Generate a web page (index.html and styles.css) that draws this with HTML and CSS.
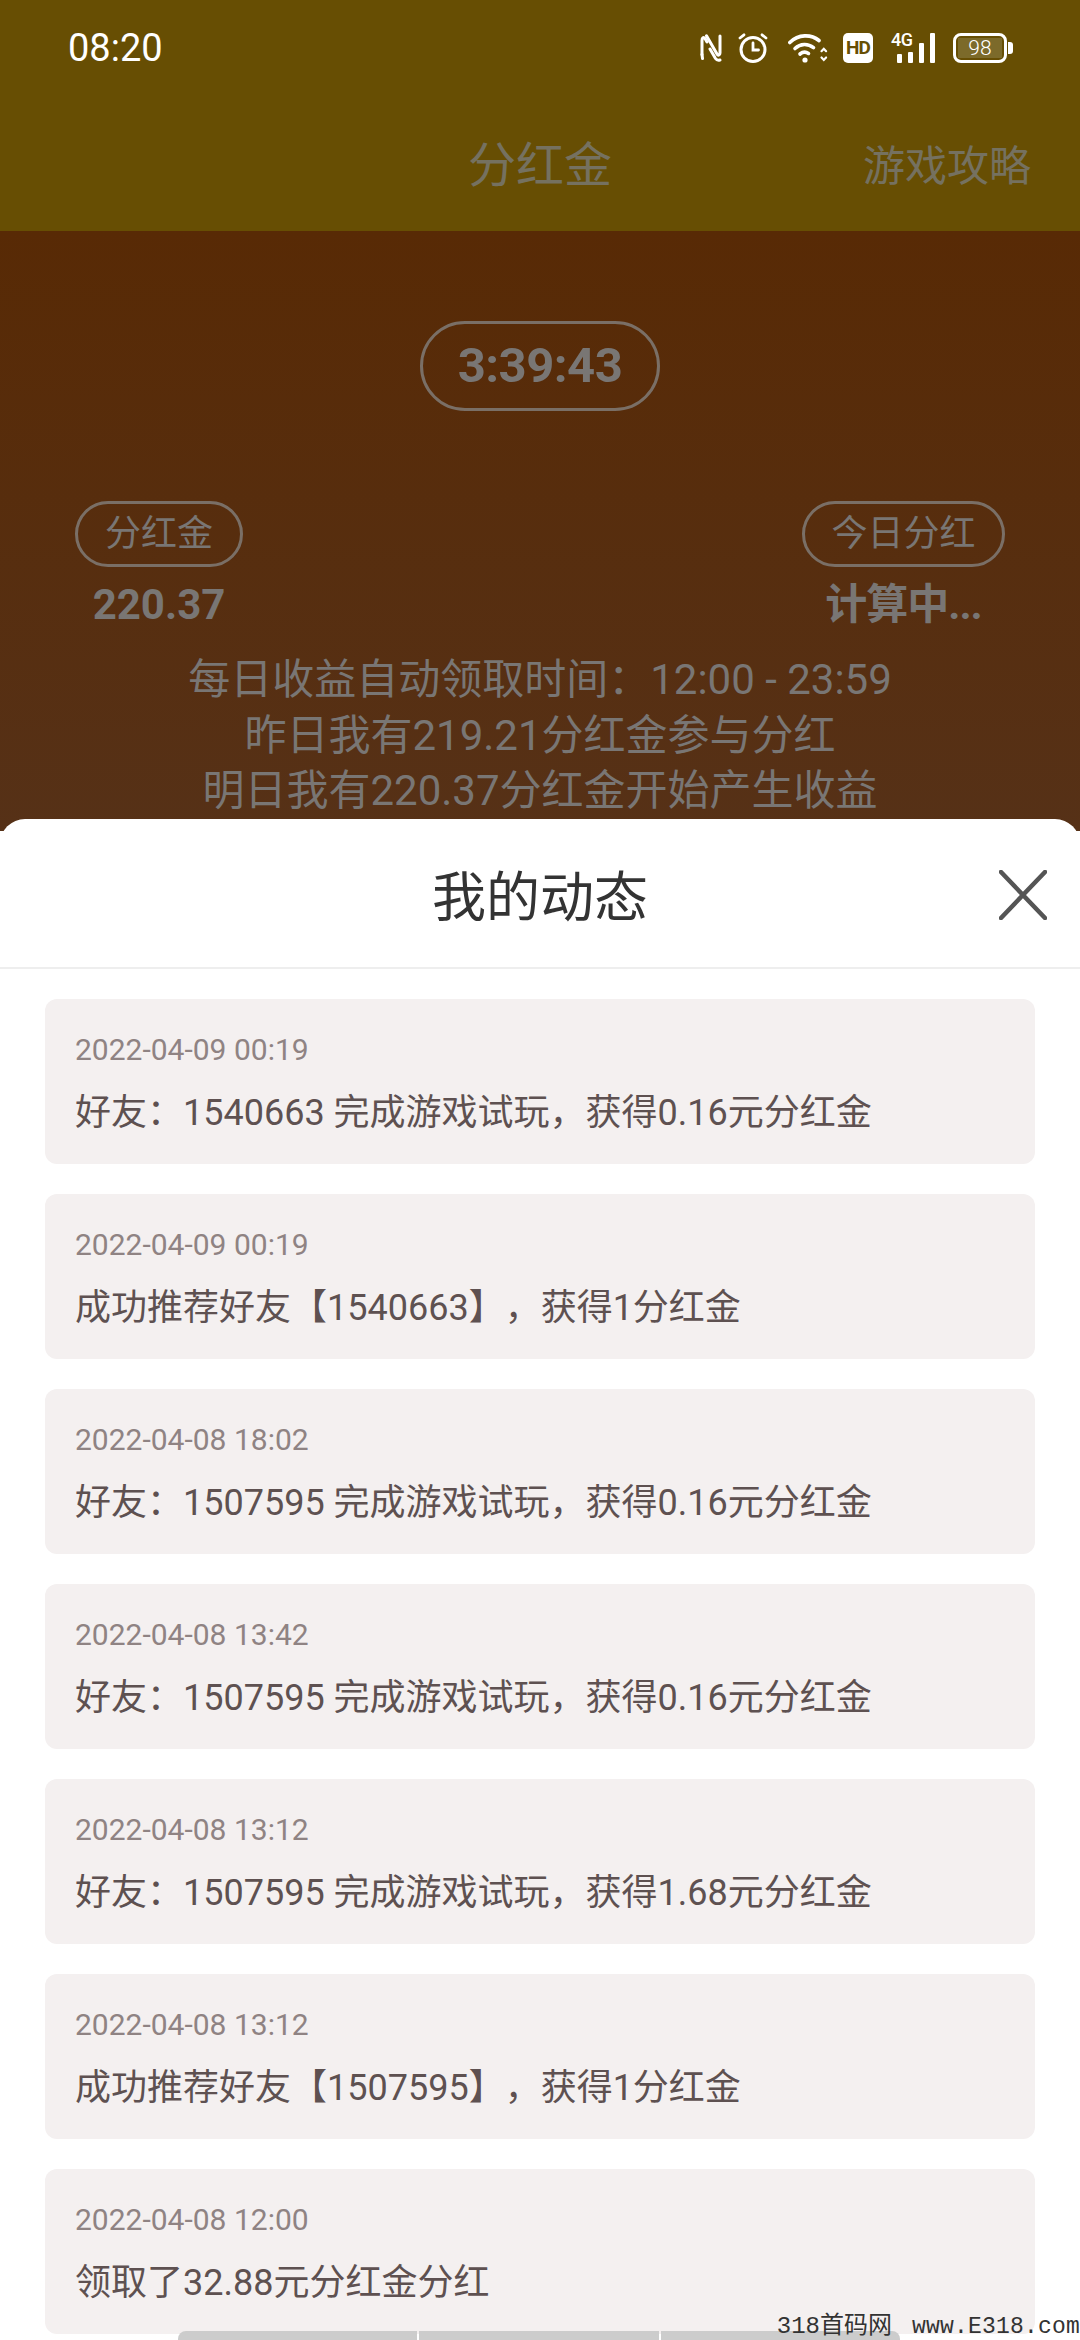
FILE: index.html
```html
<!DOCTYPE html>
<html lang="zh-CN">
<head>
<meta charset="utf-8">
<title>分红金</title>
<link rel="stylesheet" href="styles.css">
</head>
<body>
<div class="page">
  <header class="topbar">
    <div class="status">
      <span class="clock">08:20</span>
      <div class="status-icons">
        <svg class="ic-nfc" viewBox="0 0 22 28" fill="none" stroke="#fff" stroke-width="3" stroke-linecap="round" stroke-linejoin="round"><path d="M2 20.500V6.500C2 3.500 3.500 2.500 5 4.500L7 8"/><path d="M6.500 1.800 17 20c1 1.800 3 1.500 3-1V2"/><path d="M2.500 24.500 2 20.500M10 15l5.500 9.500c1 1.500 2.500 2 4.500 1.500"/></svg>
        <svg class="ic-alarm" viewBox="0 0 30 30" fill="none" stroke="#fff" stroke-linecap="round"><circle cx="15" cy="16.500" r="12" stroke-width="3"/><path d="M15 10v7h5.500" stroke-width="2.800"/><path d="M2 5 6 1.800M28 5 24 1.800" stroke-width="2.800"/></svg>
        <svg class="ic-wifi" viewBox="0 0 40 30" fill="none" stroke="#fff" stroke-width="3.600" stroke-linecap="round"><path d="M1.800 9.500C10.500 1 23 1 31 7.500"/><path d="M7 15.500c5.500-5.200 13-5.200 18.500-.8"/><path d="M12 21c2.800-2.300 6-2.300 8.500-.6"/><circle cx="17" cy="27" r="2.600" fill="#fff" stroke="none"/><path d="M33.500 18.200l2.300-2.400 2.300 2.400M33.500 24.500l2.300 2.400 2.300-2.400" stroke-width="2.200"/></svg>
        <span class="hd">HD</span>
        <div class="cell">
          <span class="cell-tag">4G</span>
          <span class="bar bar-1"></span>
          <span class="bar bar-2"></span>
          <span class="bar bar-3"></span>
          <span class="bar bar-4"></span>
        </div>
        <div class="battery"><span class="battery-body">98</span><span class="battery-cap"></span></div>
      </div>
    </div>
    <div class="navbar">
      <h1 class="nav-title">分红金</h1>
      <span class="nav-link">游戏攻略</span>
    </div>
  </header>

  <main class="hero">
    <div class="timer">3:39:43</div>
    <div class="stats">
      <div class="stat stat-left">
        <span class="tag">分红金</span>
        <strong class="stat-value">220.37</strong>
      </div>
      <div class="stat stat-right">
        <span class="tag">今日分红</span>
        <strong class="stat-value stat-pending">计算中...</strong>
      </div>
    </div>
    <div class="notes">
      <p>每日收益自动领取时间：12:00 - 23:59</p>
      <p>昨日我有219.21分红金参与分红</p>
      <p>明日我有220.37分红金开始产生收益</p>
    </div>
  </main>

  <section class="sheet">
    <div class="sheet-head">
      <h2 class="sheet-title">我的动态</h2>
      <svg class="sheet-close" viewBox="0 0 48 50" fill="none" stroke="#555" stroke-width="4.500" stroke-linecap="round"><path d="M2 2 46 48M46 2 2 48"/></svg>
    </div>
    <div class="feed">
      <article class="card"><time>2022-04-09 00:19</time><p>好友：1540663 完成游戏试玩，获得0.16元分红金</p></article>
      <article class="card"><time>2022-04-09 00:19</time><p>成功推荐好友【1540663】，获得1分红金</p></article>
      <article class="card"><time>2022-04-08 18:02</time><p>好友：1507595 完成游戏试玩，获得0.16元分红金</p></article>
      <article class="card"><time>2022-04-08 13:42</time><p>好友：1507595 完成游戏试玩，获得0.16元分红金</p></article>
      <article class="card"><time>2022-04-08 13:12</time><p>好友：1507595 完成游戏试玩，获得1.68元分红金</p></article>
      <article class="card"><time>2022-04-08 13:12</time><p>成功推荐好友【1507595】，获得1分红金</p></article>
      <article class="card"><time>2022-04-08 12:00</time><p>领取了32.88元分红金分红</p></article>
    </div>
  </section>

  <div class="tabs"><span></span><span></span><span></span></div>
  <div class="mark"><span class="mark-cn">318首码网</span><span class="mark-url">www.E318.com</span></div>
</div>
</body>
</html>
```
FILE: styles.css
```css
* { box-sizing: border-box; margin: 0; padding: 0; }

html, body { width: 1080px; height: 2340px; overflow: hidden; }

body {
  font-family: Roboto, "Noto Sans CJK SC", sans-serif;
  background: #fff;
  text-spacing-trim: space-all;
}

.page { position: relative; width: 1080px; height: 2340px; overflow: hidden; }

/* top bar */
.topbar { height: 231px; background: #674e03; display: flex; flex-direction: column; }

.status {
  height: 96px;
  padding: 0 67px 0 68px;
  display: flex;
  align-items: center;
  justify-content: space-between;
}

.clock { color: #fff; font-size: 38px; }

.status-icons { display: flex; align-items: center; height: 30px; }

.ic-nfc { width: 22px; height: 28px; margin-right: 16px; }
.ic-alarm { width: 30px; height: 30px; margin-right: 20px; }
.ic-wifi { width: 40px; height: 30px; margin-right: 15px; }

.hd {
  width: 30px;
  height: 30px;
  border-radius: 5px;
  background: #fff;
  color: #674e03;
  font-size: 19px;
  font-weight: 700;
  line-height: 30px;
  text-align: center;
  letter-spacing: -1px;
  margin-right: 18px;
}

.cell {
  position: relative;
  width: 45px;
  height: 30px;
  margin-right: 17px;
  padding-left: 6px;
  display: flex;
  align-items: flex-end;
  gap: 6px;
}
.cell-tag { position: absolute; left: 0; top: -2px; color: #fff; font-size: 18px; font-weight: 500; line-height: 18px; letter-spacing: -0.5px; }
.bar { width: 5px; background: #fff; border-radius: 1px; }
.bar-1 { height: 9px; }
.bar-2 { height: 11px; }
.bar-3 { height: 20px; }
.bar-4 { height: 30px; }

.battery { display: flex; align-items: center; gap: 1px; }
.battery-body {
  width: 54px;
  height: 30px;
  border: 3px solid #fff;
  border-radius: 8px;
  color: #fff;
  background: linear-gradient(#7c6a2a, #7c6a2a) no-repeat 2px 2px / 44px 20px;
  font-size: 21px;
  font-weight: 300;
  line-height: 24px;
  text-align: center;
}
.battery-cap { width: 5px; height: 12px; background: #fff; border-radius: 0 3px 3px 0; }

.navbar { position: relative; flex: 1; display: flex; align-items: center; justify-content: center; padding-bottom: 6px; }
.nav-title { font-size: 48px; font-weight: 400; color: #757160; }
.nav-link { position: absolute; right: 49px; top: 43px; font-size: 42px; color: #757160; line-height: 56px; }

/* dimmed hero behind the sheet */
.hero {
  height: 600px;
  background: linear-gradient(#582a05, #563117);
  color: #797674;
  display: flex;
  flex-direction: column;
  align-items: center;
  padding-top: 90px;
}

.timer {
  width: 240px;
  height: 90px;
  border: 3px solid #7a6f66;
  border-radius: 45px;
  font-size: 49px;
  font-weight: 700;
  letter-spacing: -0.5px;
  line-height: 84px;
  text-align: center;
}

.stats { width: 100%; margin-top: 90px; padding: 0 75px; display: flex; justify-content: space-between; }

.stat { display: flex; flex-direction: column; align-items: center; }
.stat-left { width: 168px; }
.stat-right { width: 203px; }

.tag {
  height: 66px;
  width: 100%;
  border: 3px solid #7a6f66;
  border-radius: 33px;
  font-size: 36px;
  line-height: 60px;
  text-align: center;
}

.stat-value { font-size: 42px; font-weight: 700; line-height: 50px; margin-top: 13px; white-space: nowrap; }
.stat-pending { letter-spacing: -1px; }

.notes { margin-top: 22px; font-size: 42px; line-height: 55.5px; text-align: center; }

/* bottom sheet */
.sheet {
  position: absolute;
  left: 0;
  right: 0;
  top: 819px;
  bottom: 0;
  background: #fff;
  border-radius: 25px 25px 0 0;
  overflow: hidden;
}

.sheet-head {
  position: relative;
  height: 150px;
  border-bottom: 2px solid #eee;
  display: flex;
  align-items: center;
  justify-content: center;
}

.sheet-title { font-size: 54px; font-weight: 400; color: #333; }

.sheet-close { position: absolute; right: 33px; top: 51px; width: 48px; height: 50px; }

.feed { padding: 30px 45px 0; display: flex; flex-direction: column; gap: 30px; }

.card {
  height: 165px;
  padding: 0 30px;
  background: #f4f0f0;
  border-radius: 12px;
  display: flex;
  flex-direction: column;
}

.card time { margin-top: 33px; font-size: 30px; line-height: 36px; color: #8f8383; }
.card p { margin-top: 20px; font-size: 36px; line-height: 50px; color: #5e5151; white-space: nowrap; }

/* bottom tab strip peeking out under the sheet */
.tabs {
  position: absolute;
  left: 178px;
  width: 722px;
  top: 2331px;
  height: 9px;
  display: flex;
  gap: 2px;
  border-radius: 8px 8px 0 0;
  overflow: hidden;
}
.tabs span { flex: 1; background: #ccc; }

.mark {
  position: absolute;
  right: 0;
  bottom: 0;
  display: flex;
  align-items: baseline;
  gap: 20px;
  font-family: "Liberation Mono", "Noto Sans CJK SC", monospace;
  font-size: 23px;
  line-height: 26px;
  color: #333;
  white-space: nowrap;
}
.mark-cn { font-size: 24px; }
.mark-url { letter-spacing: 0.2px; }
```
